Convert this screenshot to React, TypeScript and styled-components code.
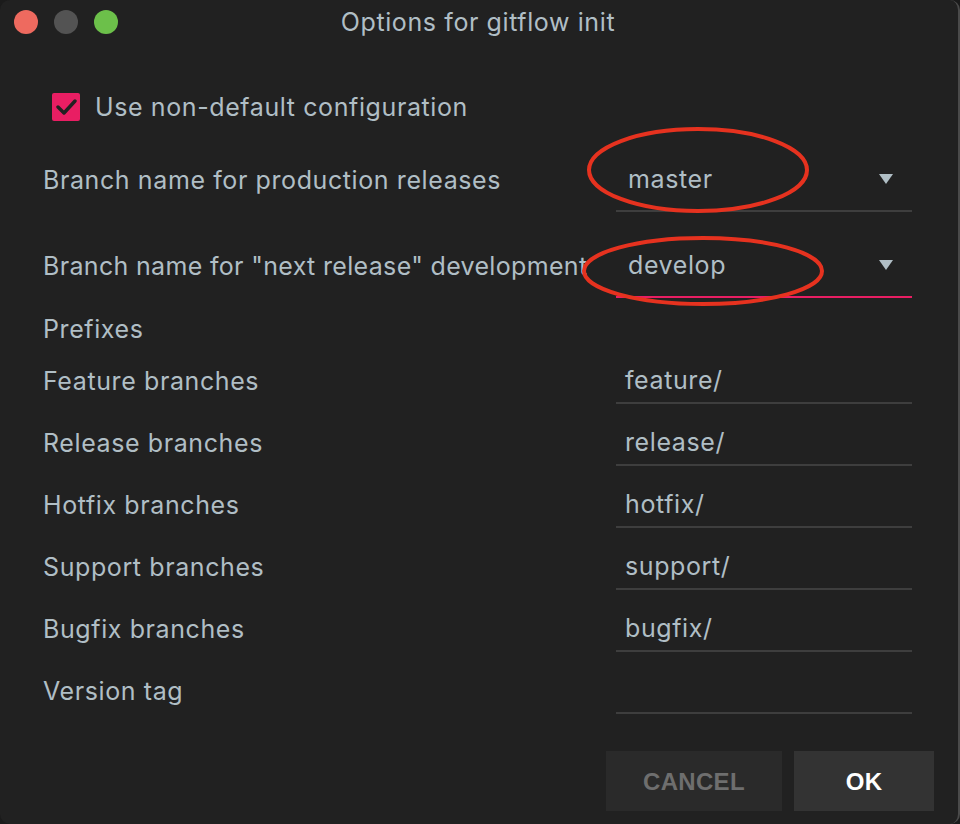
import React from "react";
import styled, { createGlobalStyle } from "styled-components";

const Global = createGlobalStyle`
  html, body { margin: 0; padding: 0; background: #1b1b1b; }
  body { font-family: Inter, "Noto Sans", sans-serif; }
  * { box-sizing: border-box; }
`;

const Window = styled.div`
  position: relative;
  width: 960px;
  height: 824px;
  background: #212121;
  border-radius: 10px;
  border-right: 2px solid #4a4a4a;
  display: flex;
  flex-direction: column;
  overflow: hidden;
  color: #b0bec5;
`;

const TitleBar = styled.div`
  height: 44px;
  display: grid;
  grid-template-columns: 1fr auto 1fr;
  align-items: center;
  padding: 0 14px;
`;

const Lights = styled.div`
  display: flex;
  gap: 16px;
`;

const Light = styled.span<{ $c: string }>`
  width: 24px;
  height: 24px;
  border-radius: 50%;
  background: ${(p) => p.$c};
`;

const Title = styled.div`
  font-size: 25px;
  letter-spacing: 0.6px;
  color: #b0bec5;
  transform: translateX(-1px);
`;

const Content = styled.div`
  padding: 43px 46px 0 43px;
  display: flex;
  flex-direction: column;
  font-size: 25px;
  letter-spacing: 0.6px;
`;

const CheckRow = styled.label`
  height: 40px;
  display: flex;
  align-items: center;
  gap: 15px;
  padding-left: 9px;
`;

const CheckBox = styled.span`
  width: 28px;
  height: 28px;
  border-radius: 2px;
  background: #e91e63;
  display: flex;
  align-items: center;
  justify-content: center;
`;

const FieldRow = styled.div<{ $h: number; $mt?: number }>`
  display: grid;
  grid-template-columns: 1fr 296px;
  column-gap: 24px;
  align-items: center;
  height: ${(p) => p.$h}px;
  margin-top: ${(p) => p.$mt ?? 0}px;
`;

const Label = styled.div<{ $combo?: boolean; $tight?: boolean }>`
  white-space: nowrap;
  padding: ${(p) => (p.$combo ? "0 0 3px" : "1px 0 0")};
  letter-spacing: ${(p) => (p.$tight ? "0.33px" : "inherit")};
`;

const SectionLabel = styled.div`
  height: 40px;
  margin-top: 11px;
  display: flex;
  align-items: center;
`;

const Combo = styled.div<{ $focused?: boolean }>`
  height: 62px;
  display: flex;
  align-items: center;
  justify-content: space-between;
  padding: 0 19px 2px 12px;
  border-bottom: 2px solid ${(p) => (p.$focused ? "#e91e63" : "#3e3e3e")};
`;

const TextField = styled.div`
  height: 48px;
  display: flex;
  align-items: center;
  padding: 2px 0 0 9px;
  border-bottom: 2px solid #3e3e3e;
`;

const Footer = styled.div`
  display: flex;
  justify-content: flex-end;
  gap: 12px;
  padding: 30px 24px 0 0;
`;

const Button = styled.button<{ $primary?: boolean }>`
  height: 60px;
  width: ${(p) => (p.$primary ? 140 : 176)}px;
  border: none;
  padding-top: 3px;
  background: ${(p) => (p.$primary ? "#333333" : "#2a2a2a")};
  color: ${(p) => (p.$primary ? "#ffffff" : "#6e6e6e")};
  font-family: "Liberation Sans", Arial, sans-serif;
  font-weight: bold;
  font-size: 24px;
  letter-spacing: 0.3px;
`;

const Annotation = styled.svg`
  position: absolute;
  left: 0;
  top: 0;
  pointer-events: none;
`;

const Arrow = () => (
  <svg width="14" height="11" viewBox="0 0 14 11">
    <path d="M0 0 L14 0 L7 10 Z" fill="#b0bec5" />
  </svg>
);

const prefixes: [string, string][] = [
  ["Feature branches", "feature/"],
  ["Release branches", "release/"],
  ["Hotfix branches", "hotfix/"],
  ["Support branches", "support/"],
  ["Bugfix branches", "bugfix/"],
  ["Version tag", ""],
];

export default function App() {
  return (
    <>
      <Global />
      <Window>
        <TitleBar>
          <Lights>
            <Light $c="#ee6a5f" />
            <Light $c="#535353" />
            <Light $c="#6cc04a" />
          </Lights>
          <Title>Options for gitflow init</Title>
          <div />
        </TitleBar>
        <Content>
          <CheckRow>
            <CheckBox>
              <svg width="22" height="18" viewBox="0 0 22 18">
                <path
                  d="M3 9 L9 15 L20 3"
                  fill="none"
                  stroke="#212121"
                  strokeWidth="3.4"
                  strokeLinecap="round"
                  strokeLinejoin="round"
                />
              </svg>
            </CheckBox>
            Use non-default configuration
          </CheckRow>
          <FieldRow $h={62} $mt={23}>
            <Label $combo>Branch name for production releases</Label>
            <Combo>
              master
              <Arrow />
            </Combo>
          </FieldRow>
          <FieldRow $h={62} $mt={24}>
            <Label $combo $tight>Branch name for "next release" development</Label>
            <Combo $focused>
              develop
              <Arrow />
            </Combo>
          </FieldRow>
          <SectionLabel>Prefixes</SectionLabel>
          {prefixes.map(([l, v]) => (
            <FieldRow key={l} $h={62}>
              <Label>{l}</Label>
              <TextField>{v}</TextField>
            </FieldRow>
          ))}
        </Content>
        <Footer>
          <Button>CANCEL</Button>
          <Button $primary>OK</Button>
        </Footer>
        <Annotation width="960" height="824">
          <ellipse cx="698" cy="170" rx="109" ry="41" fill="none" stroke="#e6321f" strokeWidth="4" />
          <ellipse cx="703" cy="271" rx="119" ry="33" fill="none" stroke="#e6321f" strokeWidth="4" />
        </Annotation>
      </Window>
    </>
  );
}
